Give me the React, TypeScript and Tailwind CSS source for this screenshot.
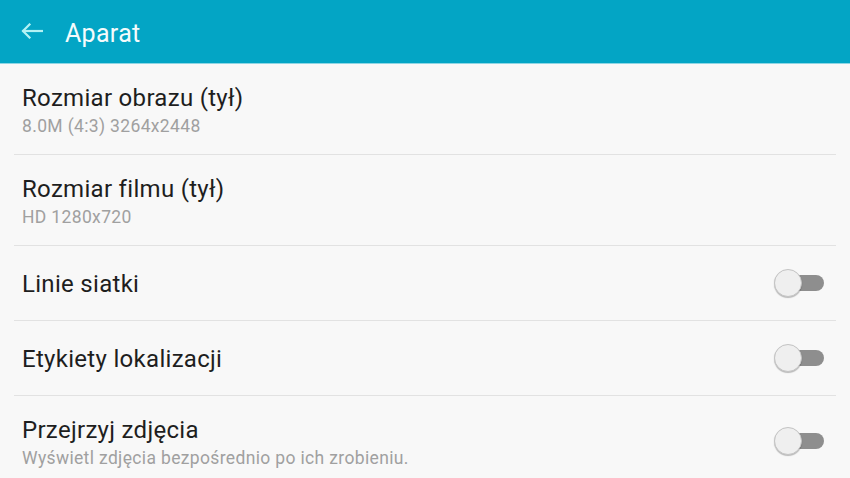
import React from "react";

const font = { fontFamily: "Roboto, 'Noto Sans', sans-serif" };

function Toggle() {
  return (
    <div className="relative w-[51px] h-[30px] shrink-0">
      <div className="absolute left-[13px] top-[7px] w-[37px] h-[16px] rounded-full bg-[#8e8e8e]" />
      <div className="absolute left-0 top-[1px] w-[28px] h-[28px] rounded-full bg-[#efefef] border border-[#c4c4c4] shadow-[0_1px_1px_rgba(0,0,0,0.25)]" />
    </div>
  );
}

type Row = { title: string; sub?: string; toggle?: boolean; h: string; last?: boolean };

const rows: Row[] = [
  { title: "Rozmiar obrazu (tył)", sub: "8.0M (4:3) 3264x2448", h: "h-[91px]" },
  { title: "Rozmiar filmu (tył)", sub: "HD 1280x720", h: "h-[91px]" },
  { title: "Linie siatki", toggle: true, h: "h-[75px]" },
  { title: "Etykiety lokalizacji", toggle: true, h: "h-[75px]" },
  { title: "Przejrzyj zdjęcia", sub: "Wyświetl zdjęcia bezpośrednio po ich zrobieniu.", toggle: true, h: "h-[90px]", last: true },
];

export default function App() {
  return (
    <div className="w-[850px] h-[478px] overflow-hidden bg-[#f8f8f8]" style={font}>
      <div className="h-[63px] bg-[#03a5c5] flex items-start">
        <svg width="22" height="16" viewBox="0 0 22 16" className="ml-[21px] mt-[23px]" fill="none" stroke="#b4f2f4" strokeWidth="2.2" strokeLinecap="square">
          <path d="M21 8H2.5" />
          <path d="M8.5 1.5L2 8l6.5 6.5" />
        </svg>
        <span className="ml-[22px] mt-[20px] text-[25px] leading-[28px] tracking-[0.3px] text-[#f4fbfc]">Aparat</span>
      </div>
      <div className="h-[1px] bg-[#8fd6e4]" />
      <div className="px-[14px]">
        {rows.map((r, i) => (
          <div
            key={i}
            className={`${r.h} flex items-center justify-between pl-[8px] pr-[11px] ${r.last ? "" : "border-b border-[#e2e2e2]"}`}
          >
            <div className="flex flex-col gap-[4px] pt-[2px]">
              <div className="text-[24px] leading-[28px] tracking-[0.3px] text-[#1e1e1e]">{r.title}</div>
              {r.sub && <div className="text-[17.5px] leading-[20px] tracking-[0.35px] text-[#a0a0a0]">{r.sub}</div>}
            </div>
            {r.toggle && <Toggle />}
          </div>
        ))}
      </div>
    </div>
  );
}
